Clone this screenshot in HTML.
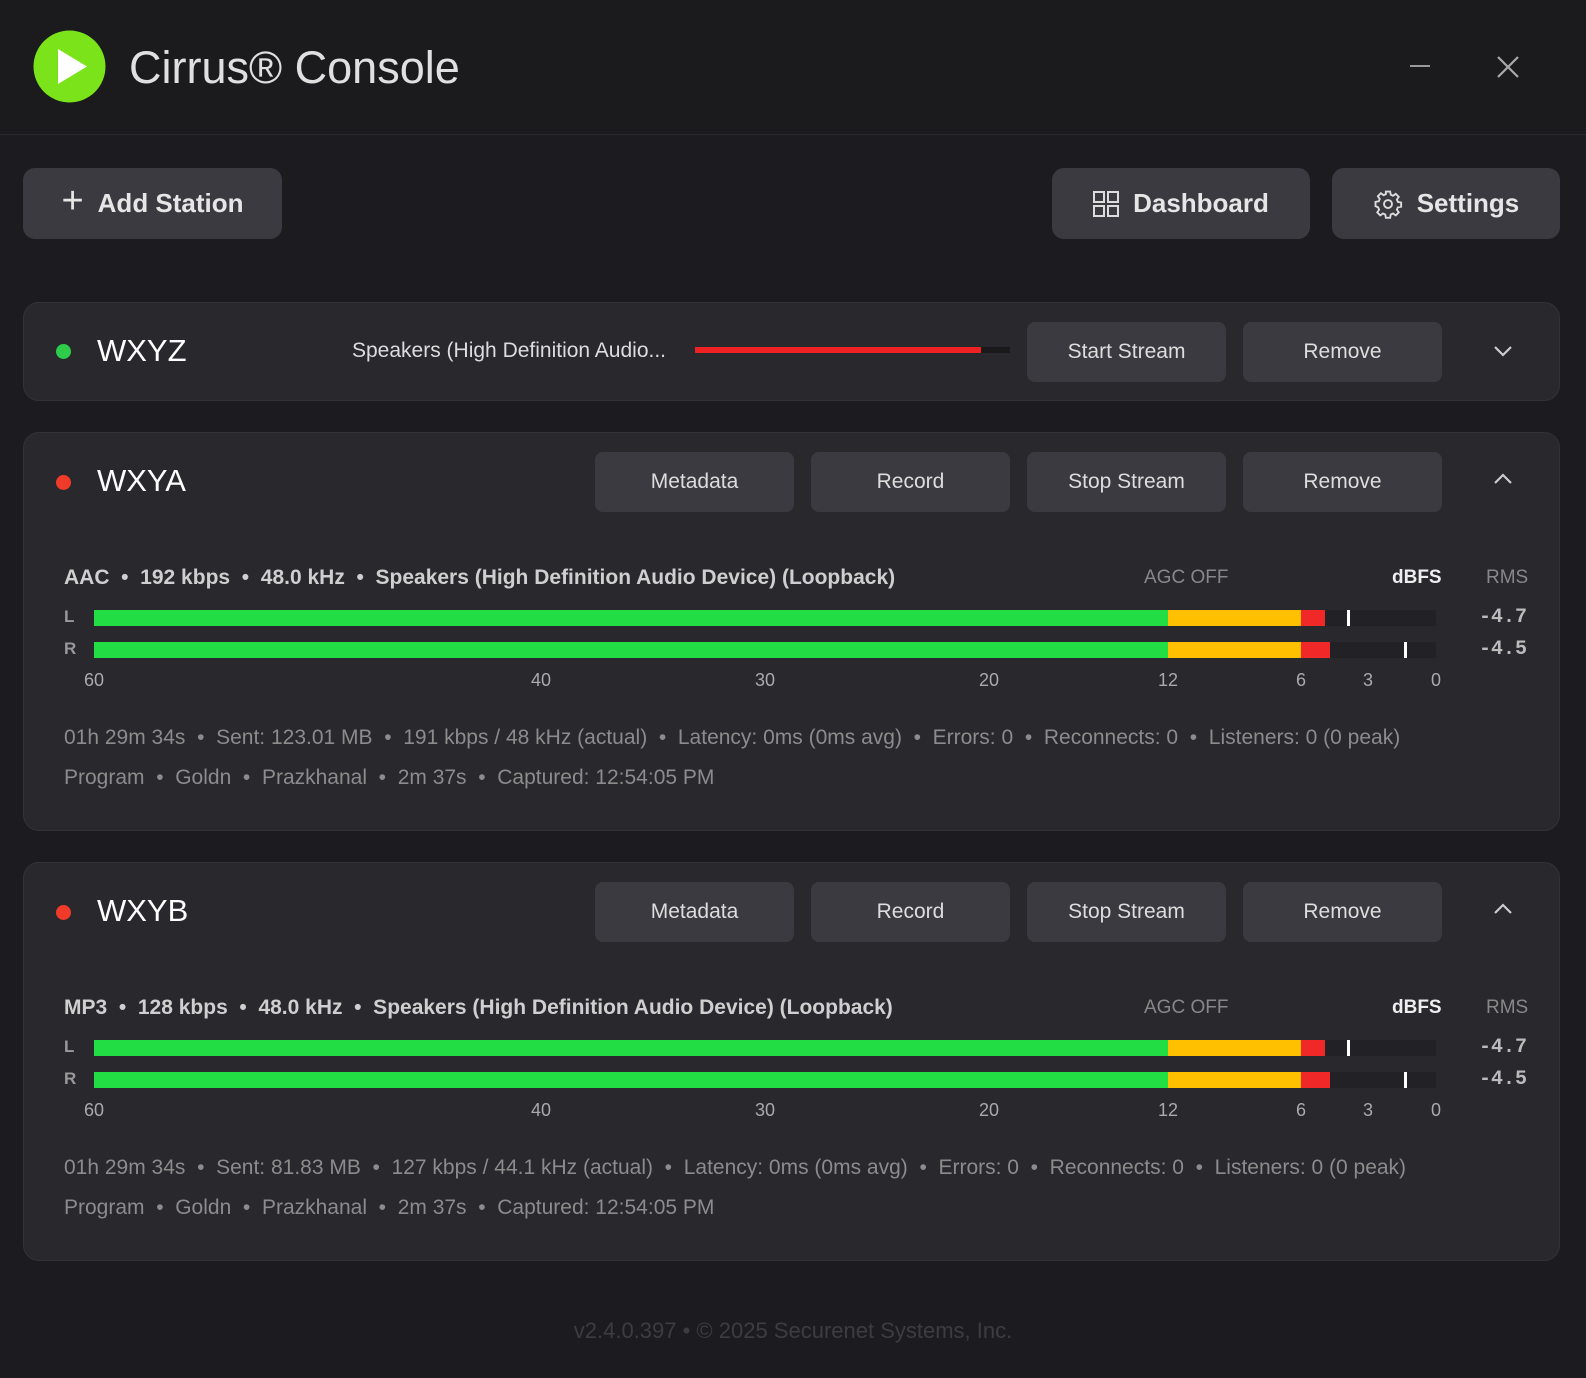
<!DOCTYPE html>
<html><head><meta charset="utf-8"><style>
*{margin:0;padding:0;box-sizing:border-box}
body{width:1586px;height:1378px;background:#1c1c20;font-family:"Liberation Sans","DejaVu Sans",sans-serif;position:relative;overflow:hidden;color:#ddd}
.a{position:absolute}
.hdr{left:0;top:0;width:1586px;height:135px;background:#1b1b1e;border-bottom:1px solid #2a2a2e}
.btn{position:absolute;background:#3a3a40;border-radius:12px;color:#e6e6e6;font-weight:bold;font-size:26px;display:flex;align-items:center;justify-content:center;gap:14px}
.card{position:absolute;left:23px;width:1537px;background:#28282d;border:1px solid #323238;border-radius:16px}
.sb{position:absolute;height:60px;width:199px;background:#3a3a40;border-radius:8px;color:#ddd;font-size:21px;display:flex;align-items:center;justify-content:center}
.dot{position:absolute;width:15px;height:15px;border-radius:50%}
.name{position:absolute;font-size:31px;color:#fff}
.t{position:absolute;white-space:nowrap}
.info{font-size:21px;color:#cfcfcf;font-weight:bold}
.st{font-size:21px;color:#8c8c8c}
.bar{position:absolute;left:70px;width:1342px;height:16px;background:#222226}
.bar div{position:absolute;top:0;height:16px}
.num{font-size:18px;color:#aaa;transform:translateX(-50%)}
.val{font-family:"Liberation Mono",monospace;font-size:20px;color:#bbb;font-weight:bold}
.chev{position:absolute;width:20px;height:20px}
</style></head><body>
<div class="a hdr"></div>
<svg class="a" style="left:33px;top:30px" width="73" height="73" viewBox="0 0 73 73"><circle cx="36.5" cy="36.5" r="36" fill="#7be31a"/><path d="M25 19 L54 36.5 L25 54 Z" fill="#fff"/></svg>
<div class="t" style="left:129px;top:42px;font-size:45px;color:#e0e0e0">Cirrus® Console</div>
<div class="a" style="left:1410px;top:65px;width:20px;height:2px;background:#999"></div>
<svg class="a" style="left:1496px;top:55px" width="24" height="24"><path d="M2 2L22 22M22 2L2 22" stroke="#aaa" stroke-width="2.2"/></svg>

<div class="btn" style="left:23px;top:168px;width:259px;height:71px"><span style="font-size:38px;font-weight:normal;margin-top:-4px">+</span>Add Station</div>
<div class="btn" style="left:1052px;top:168px;width:258px;height:71px"><svg width="26" height="26" viewBox="0 0 26 26" fill="none" stroke="#ddd" stroke-width="2"><rect x="1" y="1" width="10" height="10"/><rect x="15" y="1" width="10" height="10"/><rect x="1" y="15" width="10" height="10"/><rect x="15" y="15" width="10" height="10"/></svg>Dashboard</div>
<div class="btn" style="left:1332px;top:168px;width:228px;height:71px"><svg width="30" height="30" viewBox="0 0 24 24" fill="none" stroke="#ddd" stroke-width="1.5"><circle cx="12" cy="12" r="3.2"/><path d="M10.3 2h3.4l.5 2.6 1.8.8 2.2-1.5 2.4 2.4-1.5 2.2.8 1.8 2.6.5v3.4l-2.6.5-.8 1.8 1.5 2.2-2.4 2.4-2.2-1.5-1.8.8-.5 2.6h-3.4l-.5-2.6-1.8-.8-2.2 1.5-2.4-2.4 1.5-2.2-.8-1.8L2 13.7v-3.4l2.6-.5.8-1.8-1.5-2.2 2.4-2.4 2.2 1.5 1.8-.8z"/></svg>Settings</div>

<!-- card 1 -->
<div class="card" style="top:302px;height:99px">
<div class="dot" style="left:32px;top:41px;background:#2ecc4a"></div>
<div class="name" style="left:73px;top:30px">WXYZ</div>
<div class="t" style="left:328px;top:36px;font-size:21px;color:#ddd">Speakers (High Definition Audio...</div>
<div class="a" style="left:671px;top:44px;width:315px;height:6px;background:#1a1a1d"></div>
<div class="a" style="left:671px;top:44px;width:286px;height:6px;background:#ee2222"></div>
<div class="sb" style="left:1003px;top:19px">Start Stream</div>
<div class="sb" style="left:1219px;top:19px">Remove</div>
<svg class="chev" style="left:1469px;top:38px"><path d="M2 6l8 8 8-8" stroke="#ccc" stroke-width="2.2" fill="none"/></svg>
</div>

<!-- card 2 -->
<div class="card" style="top:432px;height:399px">
<div class="dot" style="left:32px;top:42px;background:#f03a2a"></div>
<div class="name" style="left:73px;top:30px">WXYA</div>
<div class="sb" style="left:571px;top:19px">Metadata</div>
<div class="sb" style="left:787px;top:19px">Record</div>
<div class="sb" style="left:1003px;top:19px">Stop Stream</div>
<div class="sb" style="left:1219px;top:19px">Remove</div>
<svg class="chev" style="left:1469px;top:36px"><path d="M2 14l8-8 8 8" stroke="#ccc" stroke-width="2.2" fill="none"/></svg>
<div class="t info" style="left:40px;top:133px">AAC&nbsp; •&nbsp; 192 kbps&nbsp; •&nbsp; 48.0 kHz&nbsp; •&nbsp; Speakers (High Definition Audio Device) (Loopback)</div>
<div class="t" style="left:1120px;top:134px;font-size:19px;color:#888">AGC OFF</div>
<div class="t" style="left:1368px;top:134px;font-size:19px;color:#eee;font-weight:bold">dBFS</div>
<div class="t" style="left:1462px;top:134px;font-size:19px;color:#888">RMS</div>
<div class="t" style="left:40px;top:174px;font-size:17px;color:#999;font-weight:bold">L</div>
<div class="t" style="left:40px;top:206px;font-size:17px;color:#999;font-weight:bold">R</div>
<div class="bar" style="top:177px"><div style="left:0;width:1074px;background:#22dd44"></div><div style="left:1074px;width:133px;background:#ffc000"></div><div style="left:1207px;width:24px;background:#f02828"></div><div style="left:1253px;width:3px;background:#fff"></div></div>
<div class="bar" style="top:209px"><div style="left:0;width:1074px;background:#22dd44"></div><div style="left:1074px;width:133px;background:#ffc000"></div><div style="left:1207px;width:29px;background:#f02828"></div><div style="left:1310px;width:3px;background:#fff"></div></div>
<div class="t val" style="left:1455px;top:173px">-4.7</div>
<div class="t val" style="left:1455px;top:205px">-4.5</div>
<div class="t num" style="left:70px;top:237px">60</div><div class="t num" style="left:517px;top:237px">40</div><div class="t num" style="left:741px;top:237px">30</div><div class="t num" style="left:965px;top:237px">20</div><div class="t num" style="left:1144px;top:237px">12</div><div class="t num" style="left:1277px;top:237px">6</div><div class="t num" style="left:1344px;top:237px">3</div><div class="t num" style="left:1412px;top:237px">0</div>
<div class="t st" style="left:40px;top:293px">01h 29m 34s&nbsp; •&nbsp; Sent: 123.01 MB&nbsp; •&nbsp; 191 kbps / 48 kHz (actual)&nbsp; •&nbsp; Latency: 0ms (0ms avg)&nbsp; •&nbsp; Errors: 0&nbsp; •&nbsp; Reconnects: 0&nbsp; •&nbsp; Listeners: 0 (0 peak)</div>
<div class="t st" style="left:40px;top:333px">Program&nbsp; •&nbsp; Goldn&nbsp; •&nbsp; Prazkhanal&nbsp; •&nbsp; 2m 37s&nbsp; •&nbsp; Captured: 12:54:05 PM</div>
</div>

<!-- card 3 -->
<div class="card" style="top:862px;height:399px">
<div class="dot" style="left:32px;top:42px;background:#f03a2a"></div>
<div class="name" style="left:73px;top:30px">WXYB</div>
<div class="sb" style="left:571px;top:19px">Metadata</div>
<div class="sb" style="left:787px;top:19px">Record</div>
<div class="sb" style="left:1003px;top:19px">Stop Stream</div>
<div class="sb" style="left:1219px;top:19px">Remove</div>
<svg class="chev" style="left:1469px;top:36px"><path d="M2 14l8-8 8 8" stroke="#ccc" stroke-width="2.2" fill="none"/></svg>
<div class="t info" style="left:40px;top:133px">MP3&nbsp; •&nbsp; 128 kbps&nbsp; •&nbsp; 48.0 kHz&nbsp; •&nbsp; Speakers (High Definition Audio Device) (Loopback)</div>
<div class="t" style="left:1120px;top:134px;font-size:19px;color:#888">AGC OFF</div>
<div class="t" style="left:1368px;top:134px;font-size:19px;color:#eee;font-weight:bold">dBFS</div>
<div class="t" style="left:1462px;top:134px;font-size:19px;color:#888">RMS</div>
<div class="t" style="left:40px;top:174px;font-size:17px;color:#999;font-weight:bold">L</div>
<div class="t" style="left:40px;top:206px;font-size:17px;color:#999;font-weight:bold">R</div>
<div class="bar" style="top:177px"><div style="left:0;width:1074px;background:#22dd44"></div><div style="left:1074px;width:133px;background:#ffc000"></div><div style="left:1207px;width:24px;background:#f02828"></div><div style="left:1253px;width:3px;background:#fff"></div></div>
<div class="bar" style="top:209px"><div style="left:0;width:1074px;background:#22dd44"></div><div style="left:1074px;width:133px;background:#ffc000"></div><div style="left:1207px;width:29px;background:#f02828"></div><div style="left:1310px;width:3px;background:#fff"></div></div>
<div class="t val" style="left:1455px;top:173px">-4.7</div>
<div class="t val" style="left:1455px;top:205px">-4.5</div>
<div class="t num" style="left:70px;top:237px">60</div><div class="t num" style="left:517px;top:237px">40</div><div class="t num" style="left:741px;top:237px">30</div><div class="t num" style="left:965px;top:237px">20</div><div class="t num" style="left:1144px;top:237px">12</div><div class="t num" style="left:1277px;top:237px">6</div><div class="t num" style="left:1344px;top:237px">3</div><div class="t num" style="left:1412px;top:237px">0</div>
<div class="t st" style="left:40px;top:293px">01h 29m 34s&nbsp; •&nbsp; Sent: 81.83 MB&nbsp; •&nbsp; 127 kbps / 44.1 kHz (actual)&nbsp; •&nbsp; Latency: 0ms (0ms avg)&nbsp; •&nbsp; Errors: 0&nbsp; •&nbsp; Reconnects: 0&nbsp; •&nbsp; Listeners: 0 (0 peak)</div>
<div class="t st" style="left:40px;top:333px">Program&nbsp; •&nbsp; Goldn&nbsp; •&nbsp; Prazkhanal&nbsp; •&nbsp; 2m 37s&nbsp; •&nbsp; Captured: 12:54:05 PM</div>
</div>

<div class="t" style="left:0;width:1586px;text-align:center;top:1318px;font-size:22px;color:#3c3c42">v2.4.0.397 • © 2025 Securenet Systems, Inc.</div>
</body></html>
